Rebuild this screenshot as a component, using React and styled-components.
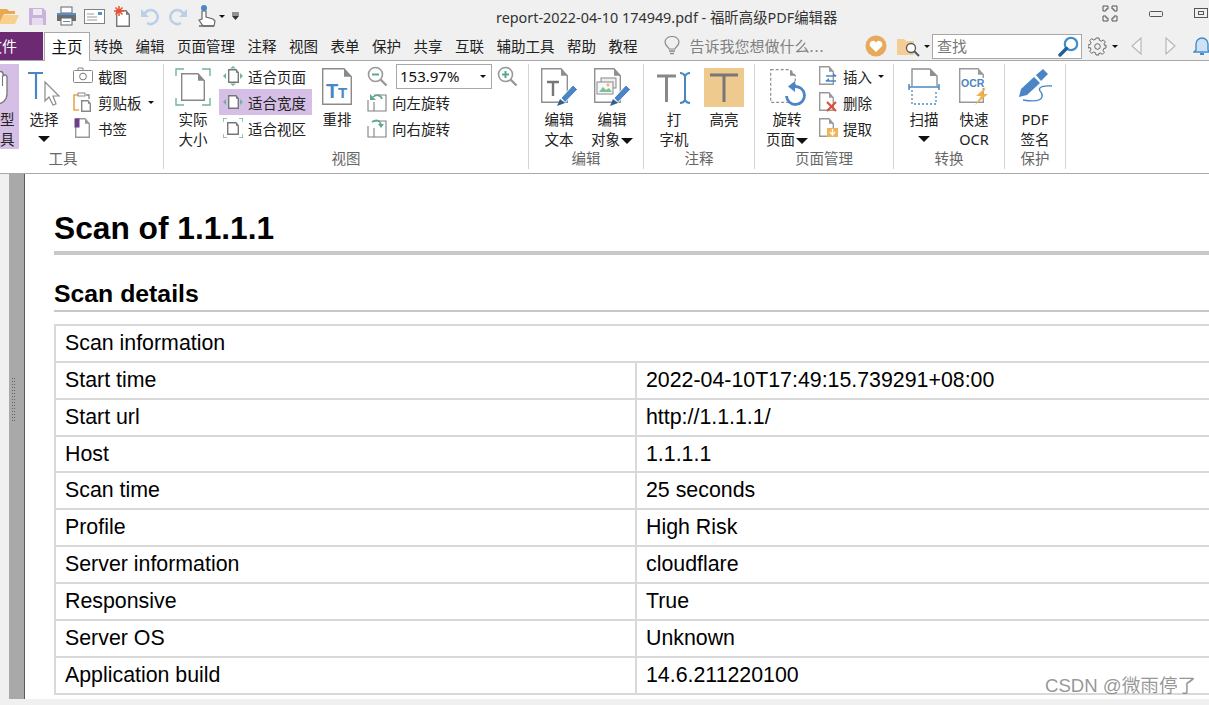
import React from "react";
import styled, { createGlobalStyle } from "styled-components";

const CJK = `"Noto Sans", "Noto Sans CJK SC", sans-serif`;
const BLUE = "#4a86c5";
const GREY = "#8f8f8f";
const TEAL = "#72b39d";

const Global = createGlobalStyle`
  html, body { margin: 0; padding: 0; height: 100%; overflow: hidden; background: #fff; }
  * { box-sizing: border-box; }
`;

const Win = styled.div`
  position: relative;
  width: 1209px;
  height: 705px;
  overflow: hidden;
  display: flex;
  flex-direction: column;
  background: #f0f0f0;
  font-family: ${CJK};
  color: #222;
`;

const TitleBar = styled.div`
  height: 32px;
  display: flex;
  align-items: center;
  flex-shrink: 0;
`;
const Quick = styled.div`
  width: 496px;
  flex-shrink: 0;
  display: flex;
  align-items: center;
`;
const QuickBtn = styled.div`
  width: ${(p) => p.$w || 28}px;
  height: 24px;
  display: flex;
  align-items: center;
  flex-shrink: 0;
`;
const Title = styled.div`
  flex: 1;
  font-size: 14.4px;
  color: #333;
  white-space: nowrap;
`;
const WinBtns = styled.div`
  width: 107px;
  display: flex;
  gap: 31px;
  align-items: center;
  padding-bottom: 5px;
`;

const TabRow = styled.div`
  height: 29px;
  display: flex;
  align-items: stretch;
  flex-shrink: 0;
  border-bottom: 1px solid #a8a8a8;
  font-size: 14.5px;
  line-height: 28px;
`;
const FileTab = styled.div`
  width: 63px;
  margin-left: -20px;
  padding-left: 7px;
  background: #6b2a72;
  color: #fff;
  font-size: 15px;
`;
const HomeTab = styled.div`
  width: 46px;
  margin-left: 1px;
  height: 29px;
  background: #fff;
  border: 1px solid #a8a8a8;
  border-bottom: 0;
  text-align: center;
  color: #111;
  font-size: 15.5px;
`;
const Tabs = styled.div`
  display: flex;
  gap: 12.5px;
  margin-left: 4px;
`;
const Tab = styled.div`
  white-space: nowrap;
`;
const TellMe = styled.div`
  display: flex;
  align-items: center;
  margin-left: 26px;
  gap: 10px;
  color: #808080;
  white-space: nowrap;
  font-size: 15px;
`;
const Dots = styled.span`
  letter-spacing: 1px;
`;
const RightTools = styled.div`
  margin-left: auto;
  width: 344px;
  flex-shrink: 0;
  display: flex;
  align-items: center;
`;
const ToolGap = styled.span`
  width: ${(p) => p.$w}px;
  flex-shrink: 0;
`;
const SearchBox = styled.div`
  width: 150px;
  height: 25px;
  flex-shrink: 0;
  margin: 0 6px 0 2px;
  padding: 0 2px 0 4px;
  background: #fff;
  border: 1px solid #a8a8a8;
  display: flex;
  align-items: center;
  justify-content: space-between;
  color: #777;
  line-height: 21px;
  font-size: 15px;
`;

const Ribbon = styled.div`
  height: 113px;
  padding-top: 3px;
  background: #fff;
  border-bottom: 1px solid #a8a8a8;
  display: flex;
  flex-shrink: 0;
  font-size: 14.5px;
`;
const Group = styled.div`
  width: ${(p) => p.$w}px;
  margin-left: ${(p) => p.$ml || 0}px;
  height: 105px;
  border-right: 1px solid #d4d4d4;
  flex-shrink: 0;
  display: flex;
  flex-direction: column;
`;
const GroupBody = styled.div`
  height: 84px;
  display: flex;
  gap: ${(p) => p.$gap ?? 6}px;
  padding-left: ${(p) => p.$pad || 0}px;
`;
const GroupName = styled.div`
  height: 20px;
  line-height: 20px;
  text-align: center;
  color: #666;
  padding-right: ${(p) => p.$shift || 0}px;
`;
const Big = styled.div`
  width: ${(p) => p.$w || 40}px;
  flex-shrink: 0;
  margin-left: ${(p) => p.$ml || 0}px;
  height: 85px;
  padding-top: 4px;
  display: flex;
  flex-direction: column;
  align-items: center;
  background: ${(p) => (p.$on ? "#d6bfe6" : "transparent")};
  color: #222;
  line-height: 20px;
  text-align: center;
  white-space: nowrap;
`;
const BigIcon = styled.div`
  height: 41px;
  width: 100%;
  display: flex;
  justify-content: center;
  align-items: flex-start;
`;
const Caret = styled.span`
  display: inline-block;
  width: 0;
  height: 0;
  flex-shrink: 0;
  border-left: ${(p) => p.$s || 6}px solid transparent;
  border-right: ${(p) => p.$s || 6}px solid transparent;
  border-top: ${(p) => p.$s || 6}px solid #111;
  margin-left: ${(p) => p.$ml || 0}px;
  margin-top: ${(p) => p.$mt || 0}px;
  vertical-align: ${(p) => p.$va || 2}px;
`;
const Col = styled.div`
  display: flex;
  flex-direction: column;
  margin-top: -1px;
`;
const Row = styled.div`
  height: 26px;
  width: ${(p) => (p.$w ? `${p.$w}px` : "auto")};
  padding-left: 4px;
  display: flex;
  align-items: center;
  gap: 5px;
  background: ${(p) => (p.$on ? "#d6bfe6" : "transparent")};
  white-space: nowrap;
`;
const RowIcon = styled.div`
  width: 20px;
  height: 20px;
  flex-shrink: 0;
`;
const ZoomRow = styled.div`
  height: 26px;
  padding-left: 4px;
  display: flex;
  align-items: center;
`;
const ZoomBox = styled.div`
  width: 96px;
  height: 25px;
  margin: 0 5px 0 8px;
  padding: 0 5px 0 3px;
  border: 1px solid #a8a8a8;
  display: flex;
  align-items: center;
  justify-content: space-between;
  font-size: 15px;
  color: #111;
`;

const Body = styled.div`
  flex: 1;
  min-height: 0;
  display: flex;
`;
const SideStrip = styled.div`
  width: 9px;
  flex-shrink: 0;
  background: #f0f0f0;
`;
const Gutter = styled.div`
  width: 16px;
  flex-shrink: 0;
  background: #a9a9a9;
  border-right: 1px solid #5a5a5a;
  padding: 204px 0 0 3px;
`;
const Page = styled.div`
  flex: 1;
  min-width: 0;
  background: #fff;
  padding: 0 0 0 29px;
  overflow: hidden;
  color: #000;
  font-family: "Liberation Sans", Arial, sans-serif;
`;
const H1 = styled.h1`
  margin: 0;
  padding-top: 34px;
  height: 81px;
  font-size: 31.7px;
  line-height: 40px;
  font-weight: bold;
  border-bottom: 4px solid #c8c8c8;
  width: 1300px;
`;
const H2 = styled.h2`
  margin: 0;
  padding-top: 23px;
  height: 57px;
  font-size: 24.8px;
  line-height: 32px;
  font-weight: bold;
  border-bottom: 2px solid #c8c8c8;
  width: 1300px;
`;
const Table = styled.table`
  margin-top: 12px;
  width: 1300px;
  table-layout: fixed;
  border-collapse: collapse;
  font-size: 21.35px;
  border-left: 2px solid #d9d9d9;
  border-top: 2px solid #d9d9d9;
`;
const Tr = styled.tr`
  height: ${(p) => p.$h || 37}px;
  border-bottom: 2px solid #d9d9d9;
`;
const Td = styled.td`
  padding: 0 0 1px 9px;
  border-right: 2px solid #d9d9d9;
  line-height: 24px;
  white-space: nowrap;
`;
const BottomStrip = styled.div`
  height: 6px;
  flex-shrink: 0;
  background: #f0f0f0;
`;
const Watermark = styled.div`
  position: absolute;
  left: 1045px;
  top: 673px;
  font-family: "Liberation Sans", "Noto Sans CJK SC", sans-serif;
  font-size: 18.6px;
  line-height: 26px;
  color: rgba(110, 110, 110, 0.72);
  white-space: nowrap;
`;

/* --- drawings --- */
const Svg = ({ w = 20, h = 20, children, style }) => (
  <svg width={w} height={h} viewBox={`0 0 ${w} ${h}`} fill="none" style={{ display: "block", flexShrink: 0, ...style }}>
    {children}
  </svg>
);

// sheet with a folded corner, drawn at x,y
const Sheet = ({ x = 0, y = 0, w = 16, h = 20, f = 5, c = GREY, sw = 1.4, fill = "#fff", dash }) => (
  <g>
    <path
      d={`M${x + 0.7} ${y + 0.7}H${x + w - f}L${x + w - 0.7} ${y + f + 0.7}V${y + h - 0.7}H${x + 0.7}Z`}
      stroke={c}
      strokeWidth={sw}
      fill={fill}
      strokeDasharray={dash}
    />
    <path d={`M${x + w - f} ${y + 0.7}V${y + f + 0.7}H${x + w - 0.7}Z`} fill={c} />
  </g>
);

const OpenFolder = () => (
  <Svg w={22} h={20} style={{ marginLeft: -2 }}>
    <path d="M2 3h7l2 2h6v3H6L2 17z" fill="#e9a94f" />
    <path d="M5 9h16l-4 9H1z" fill="#f8cf8d" />
  </Svg>
);
const SaveIco = () => (
  <Svg w={19} h={19}>
    <path d="M1 1h14l3 3v14H1z" fill="#c9b3da" />
    <rect x="5" y="2" width="9" height="6" fill="#efe8f4" />
    <rect x="4" y="11" width="11" height="7" fill="#e6dcee" />
  </Svg>
);
const PrintIco = () => (
  <Svg w={21} h={20}>
    <rect x="5" y="1" width="11" height="6" fill="#fff" stroke="#666" />
    <path d="M1 7h19v8h-4v-3H5v3H1z" fill="#6d6d6d" />
    <rect x="1" y="7" width="19" height="2" fill="#5590c8" />
    <rect x="5" y="12" width="11" height="7" fill="#fff" stroke="#666" />
    <rect x="7" y="15" width="7" height="1" fill="#5590c8" />
  </Svg>
);
const MailIco = () => (
  <Svg w={21} h={17}>
    <rect x="0.5" y="1.5" width="20" height="14" fill="#fff" stroke="#808080" />
    <rect x="14" y="4" width="4" height="3" fill="#5590c8" />
    <path d="M3 6h7M3 9h10M3 12h10" stroke="#9a9a9a" />
  </Svg>
);
const NewIco = () => (
  <Svg w={19} h={23}>
    <Sheet x={4} y={5} w={14} h={17} f={4} c="#777" />
    <path d="M7 1v10M2 6h10M3.5 2.5l7 7M10.5 2.5l-7 7" stroke="#e8502f" strokeWidth="1.5" />
  </Svg>
);
const UndoIco = ({ flip }) => (
  <Svg w={20} h={20} style={flip ? { transform: "scaleX(-1)" } : undefined}>
    <path d="M4 9a7 7 0 1 1 3 8" stroke="#b9d0e6" strokeWidth="2.6" />
    <path d="M1 3v8h8z" fill="#b9d0e6" />
  </Svg>
);
const TouchIco = () => (
  <Svg w={20} h={25}>
    <circle cx="7" cy="4" r="3" fill={BLUE} />
    <path d="M5 7h4v6l7 2 2 2-1 5H6l-4-6 3-1z" fill="#fff" stroke="#666" strokeWidth="1.2" />
    <path d="M2 22h15" stroke="#666" strokeWidth="1.5" />
  </Svg>
);
const MoreIco = () => (
  <Svg w={7} h={8}>
    <path d="M0 1h7M0 3h7" stroke="#333" />
    <path d="M0 4h7L3.5 8z" fill="#333" />
  </Svg>
);
const Corners = () => (
  <Svg w={16} h={17}>
    <path d="M1 1h5v3H4v2H1zM10 1h5v5h-3V4h-2zM1 11h3v2h2v3H1zM12 11h3v5h-5v-3h2z" stroke="#555" />
  </Svg>
);
const Minimize = () => (
  <Svg w={14} h={8}>
    <rect x="0.5" y="1.5" width="13" height="5" rx="1" stroke="#555" />
  </Svg>
);
const Maximize = () => (
  <Svg w={14} h={11}>
    <rect x="0.5" y="0.5" width="13" height="9" stroke="#555" />
    <rect x="4.5" y="3.5" width="5" height="3" stroke="#555" />
  </Svg>
);
const Bulb = () => (
  <Svg w={16} h={20}>
    <path d="M5 13c0-2-4-3-4-7a7 5.5 0 0 1 14 0c0 4-4 5-4 7z" stroke="#8a8a8a" strokeWidth="1.2" />
    <path d="M5 15h6M6 17.5h4" stroke="#8a8a8a" strokeWidth="1.4" />
  </Svg>
);
const Heart = () => (
  <Svg w={22} h={22}>
    <circle cx="11" cy="11" r="10.5" fill="#e9a95b" />
    <path d="M11 17l-5.6-5.6a3.3 3.3 0 0 1 5.6-4 3.3 3.3 0 0 1 5.6 4z" fill="#fff" />
  </Svg>
);
const FolderFind = () => (
  <Svg w={24} h={21}>
    <path d="M0 3h7l2 2h8v14H0z" fill="#f2cd96" />
    <circle cx="14" cy="12" r="4.5" fill="#fff" stroke="#555" strokeWidth="1.3" />
    <path d="M17 15l5 5" stroke="#555" strokeWidth="2" />
  </Svg>
);
const BlueLens = () => (
  <Svg w={21} h={21}>
    <circle cx="13" cy="8" r="6.2" fill="#fff" stroke="#3f8ecb" strokeWidth="2.2" />
    <path d="M8.5 12.5L2 19" stroke="#1f5f9c" strokeWidth="3.4" strokeLinecap="round" />
  </Svg>
);
const Gear = () => (
  <Svg w={19} h={19}>
    <circle cx="9.5" cy="9.5" r="2.8" stroke="#666" />
    <path
      d="M8 1h3l.5 2.4 1.8.8 2-1.3 2 2-1.3 2 .8 1.8L18 8v3l-2.2.5-.8 1.8 1.3 2-2 2-2-1.3-1.8.8L10.9 18H8l-.5-2.2-1.8-.8-2 1.3-2-2 1.3-2-.8-1.8L0 11V8l2.2-.5.8-1.8-1.3-2 2-2 2 1.3 1.8-.8z"
      stroke="#666"
    />
  </Svg>
);
const Arrow = ({ flip }) => (
  <Svg w={11} h={18} style={flip ? { transform: "scaleX(-1)" } : undefined}>
    <path d="M10 1v16L1 9z" stroke="#b8b8b8" strokeWidth="1.2" fill="#f6f6f6" />
  </Svg>
);
const Bell = () => (
  <Svg w={18} h={20}>
    <path d="M3 14V8a6 6 0 0 1 12 0v6l2 2H1z" fill="#cfe1f2" stroke="#3f8ecb" strokeWidth="1.4" />
    <path d="M7 18h4" stroke="#3f8ecb" strokeWidth="2" />
  </Svg>
);

const HandIco = () => (
  <Svg w={38} h={39}>
    <path
      d="M12 36V14a2.5 2.5 0 0 1 5 0V6a2.5 2.5 0 0 1 5 0v2a2.2 2.2 0 0 1 4 1.5V26c0 6-5 10-10 10z"
      fill="#fff"
      stroke="#777"
      strokeWidth="1.3"
    />
    <path d="M21.5 8v10" stroke="#777" strokeWidth="1.1" />
  </Svg>
);
const SelectIco = () => (
  <Svg w={36} h={39}>
    <path d="M2 5h15M10 5v26" stroke={BLUE} strokeWidth="2.2" />
    <path d="M19 14l14 14h-6l3 8-3 1-4-8-4 4z" fill="#fff" stroke="#8c8c8c" strokeWidth="1.2" />
  </Svg>
);
const Camera = () => (
  <Svg>
    <rect x="0.5" y="4.5" width="19" height="12" rx="1" fill="#fff" stroke="#888" />
    <path d="M5 4V2h5v2" stroke="#888" />
    <circle cx="10" cy="10.5" r="3.4" stroke="#777" />
  </Svg>
);
const Clip = () => (
  <Svg>
    <path d="M5 3H1v15h5" stroke="#eda64a" strokeWidth="1.6" />
    <path d="M13 3h3v4" stroke="#888" strokeWidth="1.3" />
    <rect x="5" y="1" width="7" height="3" fill="#fff" stroke="#888" />
    <Sheet x={8} y={8} w={10} h={12} f={3} c="#888" />
  </Svg>
);
const Mark = () => (
  <Svg>
    <Sheet x={2} y={0} w={15} h={20} f={5} c="#999" />
    <rect x="1.5" y="0.5" width="5" height="9" fill="#6d3f8d" />
  </Svg>
);
const Frame = ({ c = TEAL, children }) => (
  <Svg w={36} h={38}>
    <path d="M1 8V1h8M27 1h8v7M1 30v7h8M27 37h8v-7" stroke={c} strokeWidth="1.4" />
    {children}
  </Svg>
);
const FitPage = () => (
  <Svg>
    <Sheet x={5} y={3} w={11} h={14} f={3} c="#777" />
    <path d="M10 0l3 2.5H7zM10 20l3-2.5H7zM0 10l3-3v6zM20 10l-3-3v6z" fill={TEAL} />
  </Svg>
);
const FitWidth = () => (
  <Svg>
    <Sheet x={5} y={3} w={11} h={14} f={3} c="#777" />
    <path d="M0 10l3-3v6zM20 10l-3-3v6z" fill={TEAL} />
  </Svg>
);
const FitView = () => (
  <Svg>
    <Sheet x={4} y={4} w={12} h={13} f={3} c="#777" />
    <path d="M0 4V0h4M16 0h4v4M0 16v4h4M16 20h4v-4" stroke={TEAL} strokeWidth="1.4" />
  </Svg>
);
const Reflow = () => (
  <Svg w={32} h={38}>
    <Sheet x={1} y={0} w={30} h={37} f={8} c="#8a8a8a" />
    <text x="5" y="30" fill={BLUE} fontFamily="Liberation Sans" fontWeight="bold" fontSize="20">T</text>
    <text x="17" y="30" fill={BLUE} fontFamily="Liberation Sans" fontWeight="bold" fontSize="15">T</text>
  </Svg>
);
const Lens = ({ plus }) => (
  <Svg w={21} h={21}>
    <circle cx="8.5" cy="8.5" r="7" fill="#fff" stroke="#999" strokeWidth="1.6" />
    <path d="M13.5 13.5l6 6" stroke="#999" strokeWidth="2.4" />
    <path d={plus ? "M5 8.5h7M8.5 5v7" : "M5 8.5h7"} stroke="#55a98c" strokeWidth="2" />
  </Svg>
);
const Rotate = ({ right }) => (
  <Svg>
    <path d="M7 3h12v16H7V10M1 8v11h6" stroke="#808080" strokeWidth="1.1" fill="#fff" />
    <path d={right ? "M5 4c4-3 8-2 9 3" : "M15 7c-1-4-6-5-9-2"} stroke="#5fa78d" strokeWidth="1.7" />
    <path d={right ? "M11 6h6l-3 4z" : "M3 2v6h6z"} fill="#5fa78d" />
  </Svg>
);
const Pencil = () => (
  <g>
    <path d="M21 30l12-13 4.5 4.5-12.5 13z" fill={BLUE} stroke="#fff" strokeWidth="1" />
    <path d="M17 38l3-7 5 4z" fill="#2f5f90" />
  </g>
);
const EditText = () => (
  <Svg w={38} h={39}>
    <Sheet x={1} y={0} w={27} h={35} f={7} c="#8f8f8f" />
    <path d="M7 14h12M13 14v14" stroke="#777" strokeWidth="2.4" />
    <Pencil />
  </Svg>
);
const EditObj = () => (
  <Svg w={38} h={39}>
    <Sheet x={1} y={0} w={27} h={35} f={7} c="#8f8f8f" />
    <rect x="8" y="10" width="15" height="10" fill="#eee" stroke="#888" />
    <rect x="4" y="14" width="16" height="12" fill="#f7f7f7" stroke="#888" />
    <path d="M6 24l4-5 3 3 3-2 3 4z" fill="#7cbf9a" />
    <circle cx="15" cy="17" r="1.4" fill="#efb45a" />
    <Pencil />
  </Svg>
);
const Typewriter = () => (
  <Svg w={38} h={36}>
    <path d="M2 8h19M11.5 8v26" stroke="#888" strokeWidth="3" />
    <path d="M25 5c3 0 4 1 5 3 1-2 2-3 5-3M30 8v24M25 35c3 0 4-1 5-3 1 2 2 3 5 3" stroke={BLUE} strokeWidth="2" />
  </Svg>
);
const HighlightIco = () => (
  <Svg w={40} h={39}>
    <rect width="40" height="39" fill="#efca8e" />
    <path d="M6 7h28M20 7v27" stroke="#777" strokeWidth="3" />
  </Svg>
);
const RotatePage = () => (
  <Svg w={38} h={39}>
    <Sheet x={2} y={1} w={26} h={34} f={6} c="#8f8f8f" dash="3 2" sw={1.2} />
    <path d="M27 18.5a9 9 0 1 1-8.5 9.5" stroke={BLUE} strokeWidth="2.8" fill="#fff" />
    <path d="M27 13v11l-7-5.500z" fill={BLUE} />
  </Svg>
);
const Insert = () => (
  <Svg>
    <Sheet x={1} y={0} w={15} h={19} f={5} c="#999" />
    <path d="M8 10h10M8 15h10" stroke={BLUE} strokeWidth="1.6" />
    <path d="M15 7l4 3-4 0zM11 12l-4 3 4 0z" fill={BLUE} />
  </Svg>
);
const Delete = () => (
  <Svg>
    <Sheet x={1} y={0} w={15} h={19} f={5} c="#999" />
    <path d="M9 10l9 9M18 10l-9 9" stroke="#d9503c" strokeWidth="2.2" />
  </Svg>
);
const Extract = () => (
  <Svg>
    <Sheet x={1} y={0} w={15} h={19} f={5} c="#999" />
    <rect x="9" y="10" width="11" height="9" fill="#efb45a" />
    <path d="M14.5 11v5M12 14l2.500 3 2.500-3" stroke="#fff" strokeWidth="1.4" />
  </Svg>
);
const ScanIco = () => (
  <Svg w={32} h={38}>
    <path d="M4 18V1h18l7 7v10" stroke="#8f8f8f" strokeWidth="1.4" />
    <path d="M22 1v7h7z" fill="#8f8f8f" />
    <path d="M1 19h30M1 16v6M31 16v6" stroke={BLUE} strokeWidth="1.5" />
    <path d="M4 22v14h24V22" stroke={BLUE} strokeWidth="1.3" strokeDasharray="2 2" />
  </Svg>
);
const OcrIco = () => (
  <Svg w={32} h={38}>
    <Sheet x={1} y={0} w={25} h={35} f={6} c="#999" />
    <rect x="3" y="10" width="24" height="10" fill="#fff" />
    <text x="3" y="19" fill={BLUE} fontFamily="Liberation Sans" fontWeight="bold" fontSize="10.500">OCR</text>
    <path d="M28 19l-10 9h5l-6 9 13-11h-5z" fill="#efb04f" />
  </Svg>
);
const SignIco = () => (
  <Svg w={34} h={36}>
    <path d="M1 29l2-8 13-12 6 6-13 12z" fill={BLUE} />
    <path d="M18 7l7-6 5 5-7 7z" fill={BLUE} />
    <path d="M5 32c6 1 17 2 19-3s-5-6-2-9 8-2 12-2" stroke={BLUE} strokeWidth="1.3" />
  </Svg>
);
const Grip = () => (
  <Svg w={3} h={44}>
    {Array.from({ length: 15 }, (_, i) => (
      <path key={i} d={`M0 ${i * 3}h1v1H0zM2 ${i * 3}h1v1H2z`} fill="#666" />
    ))}
  </Svg>
);

const rows = [
  ["Start time", "2022-04-10T17:49:15.739291+08:00", 37],
  ["Start url", "http://1.1.1.1/", 37],
  ["Host", "1.1.1.1", 36],
  ["Scan time", "25 seconds", 37],
  ["Profile", "High Risk", 37],
  ["Server information", "cloudflare", 37],
  ["Responsive", "True", 37],
  ["Server OS", "Unknown", 37],
  ["Application build", "14.6.211220100", 37],
];

const tabs = ["转换", "编辑", "页面管理", "注释", "视图", "表单", "保护", "共享", "互联", "辅助工具", "帮助", "教程"];

export default function App() {
  return (
    <Win>
      <Global />
      <TitleBar>
        <Quick>
          <QuickBtn><OpenFolder /></QuickBtn>
          <QuickBtn><SaveIco /></QuickBtn>
          <QuickBtn><PrintIco /></QuickBtn>
          <QuickBtn><MailIco /></QuickBtn>
          <QuickBtn><NewIco /></QuickBtn>
          <QuickBtn><UndoIco /></QuickBtn>
          <QuickBtn $w={29}><UndoIco flip /></QuickBtn>
          <QuickBtn $w={22}><TouchIco /></QuickBtn>
          <QuickBtn $w={13}><Caret $s={3} /></QuickBtn>
          <QuickBtn $w={8}><MoreIco /></QuickBtn>
        </Quick>
        <Title>report-2022-04-10 174949.pdf - 福昕高级PDF编辑器</Title>
        <WinBtns>
          <Corners />
          <Minimize />
          <Maximize />
        </WinBtns>
      </TitleBar>

      <TabRow>
        <FileTab>文件</FileTab>
        <HomeTab>主页</HomeTab>
        <Tabs>
          {tabs.map((t) => (
            <Tab key={t}>{t}</Tab>
          ))}
        </Tabs>
        <TellMe>
          <Bulb />
          <span>告诉我您想做什么<Dots>...</Dots></span>
        </TellMe>
        <RightTools>
          <Heart />
          <ToolGap $w={10} />
          <FolderFind />
          <Caret $s={3.5} $ml={3} />
          <SearchBox>
            查找
            <BlueLens />
          </SearchBox>
          <Gear />
          <Caret $s={3.5} $ml={5} />
          <ToolGap $w={13} />
          <Arrow />
          <ToolGap $w={23} />
          <Arrow flip />
          <ToolGap $w={17} />
          <Bell />
        </RightTools>
      </TabRow>

      <Ribbon>
        <Group $w={183} $ml={-19}>
          <GroupBody $gap={6}>
            <Big $on $w={38}>
              <BigIcon><HandIco /></BigIcon>
              <span>手型</span>
              <span>工具</span>
            </Big>
            <Big $w={38}>
              <BigIcon><SelectIco /></BigIcon>
              <span>选择</span>
              <Caret $va={0} $mt={7} />
            </Big>
            <Col>
              <Row><RowIcon><Camera /></RowIcon>截图</Row>
              <Row><RowIcon><Clip /></RowIcon>剪贴板<Caret $s={3.5} $ml={1} /></Row>
              <Row><RowIcon><Mark /></RowIcon>书签</Row>
            </Col>
          </GroupBody>
          <GroupName $shift={18}>工具</GroupName>
        </Group>

        <Group $w={365}>
          <GroupBody $pad={10} $gap={7}>
            <Big $w={38}>
              <BigIcon><Frame><Sheet x={6} y={5} w={24} h={28} f={7} c="#888" /></Frame></BigIcon>
              <span>实际</span>
              <span>大小</span>
            </Big>
            <Col>
              <Row><RowIcon><FitPage /></RowIcon>适合页面</Row>
              <Row $on $w={93}><RowIcon><FitWidth /></RowIcon>适合宽度</Row>
              <Row><RowIcon><FitView /></RowIcon>适合视区</Row>
            </Col>
            <Big $w={38} $ml={-1}>
              <BigIcon><Reflow /></BigIcon>
              <span>重排</span>
            </Big>
            <Col>
              <ZoomRow>
                <Lens />
                <ZoomBox>153.97%<Caret $s={3} /></ZoomBox>
                <Lens plus />
              </ZoomRow>
              <Row><RowIcon><Rotate /></RowIcon>向左旋转</Row>
              <Row><RowIcon><Rotate right /></RowIcon>向右旋转</Row>
            </Col>
          </GroupBody>
          <GroupName>视图</GroupName>
        </Group>

        <Group $w={115}>
          <GroupBody $pad={9} $gap={11}>
            <Big $w={42}>
              <BigIcon><EditText /></BigIcon>
              <span>编辑</span>
              <span>文本</span>
            </Big>
            <Big $w={42}>
              <BigIcon><EditObj /></BigIcon>
              <span>编辑</span>
              <span>对象<Caret $ml={1} $va={1} /></span>
            </Big>
          </GroupBody>
          <GroupName>编辑</GroupName>
        </Group>

        <Group $w={111}>
          <GroupBody $pad={10} $gap={10}>
            <Big $w={40}>
              <BigIcon><Typewriter /></BigIcon>
              <span>打</span>
              <span>字机</span>
            </Big>
            <Big $w={40}>
              <BigIcon><HighlightIco /></BigIcon>
              <span>高亮</span>
            </Big>
          </GroupBody>
          <GroupName>注释</GroupName>
        </Group>

        <Group $w={139}>
          <GroupBody $pad={11} $gap={6}>
            <Big $w={42}>
              <BigIcon><RotatePage /></BigIcon>
              <span>旋转</span>
              <span>页面<Caret $ml={1} $va={1} /></span>
            </Big>
            <Col>
              <Row><RowIcon><Insert /></RowIcon>插入<Caret $s={3.5} $ml={1} /></Row>
              <Row><RowIcon><Delete /></RowIcon>删除</Row>
              <Row><RowIcon><Extract /></RowIcon>提取</Row>
            </Col>
          </GroupBody>
          <GroupName>页面管理</GroupName>
        </Group>

        <Group $w={111}>
          <GroupBody $pad={10} $gap={10}>
            <Big $w={40}>
              <BigIcon><ScanIco /></BigIcon>
              <span>扫描</span>
              <Caret $va={0} $mt={7} />
            </Big>
            <Big $w={40}>
              <BigIcon><OcrIco /></BigIcon>
              <span>快速</span>
              <span>OCR</span>
            </Big>
          </GroupBody>
          <GroupName>转换</GroupName>
        </Group>

        <Group $w={61}>
          <GroupBody $pad={10}>
            <Big $w={40}>
              <BigIcon><SignIco /></BigIcon>
              <span>PDF</span>
              <span>签名</span>
            </Big>
          </GroupBody>
          <GroupName>保护</GroupName>
        </Group>
      </Ribbon>

      <Body>
        <SideStrip />
        <Gutter><Grip /></Gutter>
        <Page>
          <H1>Scan of 1.1.1.1</H1>
          <H2>Scan details</H2>
          <Table>
            <colgroup>
              <col style={{ width: 581 }} />
              <col />
            </colgroup>
            <tbody>
              <Tr>
                <Td colSpan={2}>Scan information</Td>
              </Tr>
              {rows.map(([k, v, h]) => (
                <Tr key={k} $h={h}>
                  <Td>{k}</Td>
                  <Td>{v}</Td>
                </Tr>
              ))}
            </tbody>
          </Table>
        </Page>
      </Body>
      <BottomStrip />
      <Watermark>CSDN @微雨停了</Watermark>
    </Win>
  );
}
